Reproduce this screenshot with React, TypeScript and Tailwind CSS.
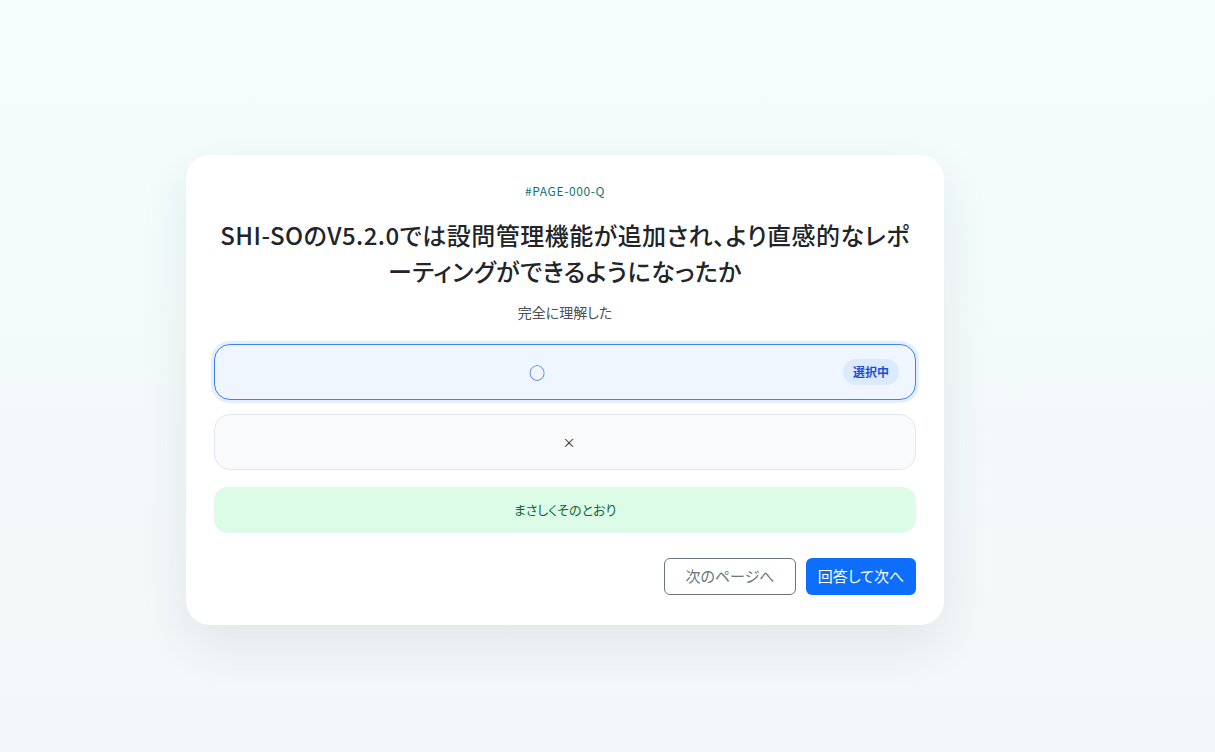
import React, { useState } from 'react';

const options = [
  { id: 'yes', label: '○' },
  { id: 'no', label: '×' },
];

const QuestionPage = () => {
  const [selected, setSelected] = useState('yes');

  return (
    <div
      className="min-h-screen bg-gradient-to-b from-[#f4fdfc] to-[#f3f7f9] pt-[155px] pl-[186px] [font-feature-settings:'palt']"
      style={{ fontFamily: '"Noto Sans CJK JP", "Noto Sans", sans-serif' }}
    >
      {/* --- Question Card --- */}
      <div className="w-[758px] bg-white rounded-[24px] px-7 pt-7 pb-[30px] shadow-[0_18px_50px_rgba(30,60,70,0.09)]">
        <div className="text-center text-xs leading-4 text-[#0f766e] tracking-wider mb-[18px]">
          #PAGE-000-Q
        </div>
        <h1 className="text-center text-2xl leading-9 font-medium tracking-[0.02em] text-[#212529]">
          SHI-SOのV5.2.0では設問管理機能が追加され、より直感的なレポーティングができるようになったか
        </h1>
        <p className="text-center text-sm leading-5 text-[#495057] mt-[13px] mb-[22px]">
          完全に理解した
        </p>

        {/* Options */}
        <div className="flex flex-col gap-[14px]">
          {options.map((opt) => {
            const isSelected = selected === opt.id;
            return (
              <button
                key={opt.id}
                onClick={() => setSelected(opt.id)}
                className={`h-14 w-full flex items-center px-4 rounded-2xl border ${
                  isSelected
                    ? 'bg-[#eff6ff] border-[#3b82f6] ring-[3px] ring-[#e4eefe]'
                    : 'bg-[#f8fafc] border-[#e2e8f0] pl-6'
                }`}
              >
                <span
                  className={`flex-1 text-center ${
                    isSelected ? 'text-base text-[#1d4ed8]' : 'text-[13px] text-[#212529]'
                  }`}
                >
                  {opt.label}
                </span>
                {isSelected && (
                  <span className="bg-[#dbeafe] text-[#1d4ed8] text-xs leading-4 font-bold px-2.5 py-[5px] rounded-full">
                    選択中
                  </span>
                )}
              </button>
            );
          })}
        </div>

        {/* Answer feedback */}
        <div className="mt-[17px] h-[46px] flex items-center justify-center rounded-[14px] bg-[#dcfce7] text-[13px] text-[#166534]">
          まさしくそのとおり
        </div>

        {/* Actions */}
        <div className="mt-[25px] flex justify-end gap-2.5">
          <button className="h-[37px] w-[132px] rounded-md border border-[#6c757d] text-[15px] text-[#6c757d] bg-white">
            次のページへ
          </button>
          <button className="h-[37px] w-[110px] rounded-md bg-[#0d6efd] text-[15px] text-white">
            回答して次へ
          </button>
        </div>
      </div>
    </div>
  );
};

export default function App() {
  return <QuestionPage />;
}
